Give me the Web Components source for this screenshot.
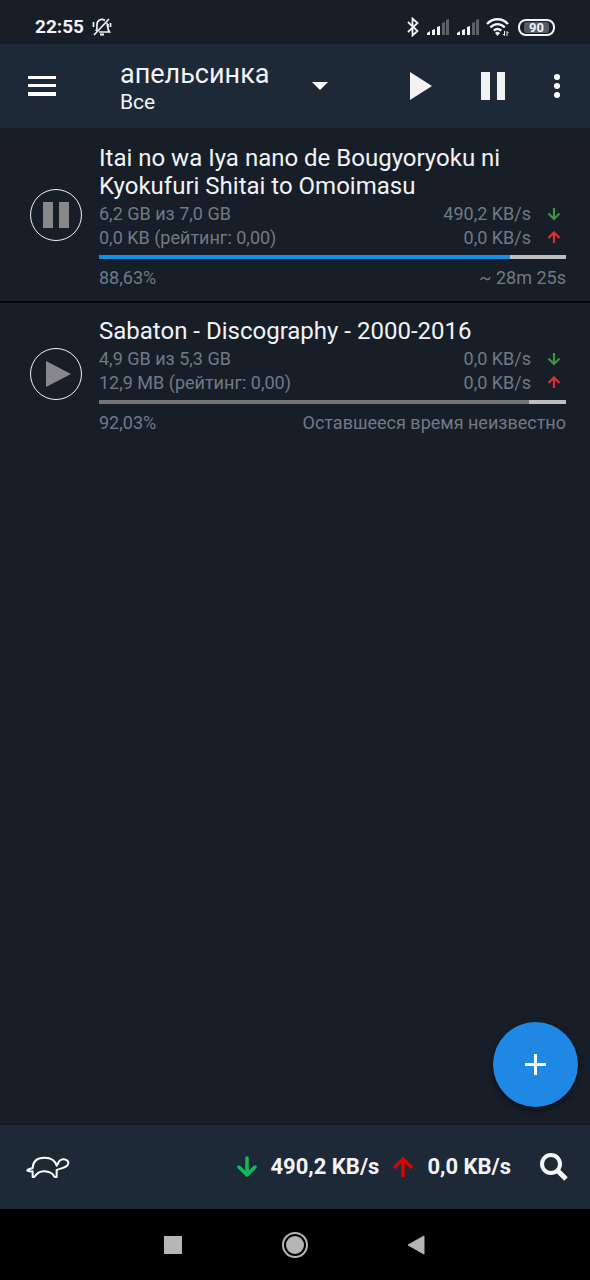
<!DOCTYPE html>
<html lang="ru">
<head>
<meta charset="utf-8">
<meta name="viewport" content="width=device-width, initial-scale=1">
<title>апельсинка</title>
<style>
  body {
    margin: 0;
    background: #171e28;
    color: #f1f3f6;
    font-family: Roboto, "Noto Sans", sans-serif;
    --bar: #1e2937;
    --muted: #6f7b84;
  }
</style>
</head>
<body>
<torrent-app>
  <status-bar slot="status" time="22:55" battery="90"></status-bar>
  <app-toolbar slot="toolbar">
    <span slot="title">апельсинка</span>
    <span slot="subtitle">Все</span>
  </app-toolbar>
  <torrent-item state="active" percent="88">
    <span slot="name">Itai no wa Iya nano de Bougyoryoku ni Kyokufuri Shitai to Omoimasu</span>
    <span slot="size">6,2 GB из 7,0 GB</span>
    <span slot="down">490,2 KB/s</span>
    <span slot="ratio">0,0 KB (рейтинг: 0,00)</span>
    <span slot="up">0,0 KB/s</span>
    <span slot="done">88,63%</span>
    <span slot="eta">~ 28m 25s</span>
  </torrent-item>
  <torrent-item state="stopped" percent="92">
    <span slot="name">Sabaton - Discography - 2000-2016</span>
    <span slot="size">4,9 GB из 5,3 GB</span>
    <span slot="down">0,0 KB/s</span>
    <span slot="ratio">12,9 MB (рейтинг: 0,00)</span>
    <span slot="up">0,0 KB/s</span>
    <span slot="done">92,03%</span>
    <span slot="eta">Оставшееся время неизвестно</span>
  </torrent-item>
  <add-button slot="fab"></add-button>
  <speed-bar slot="footer">
    <span slot="down">490,2 KB/s</span>
    <span slot="up">0,0 KB/s</span>
  </speed-bar>
  <nav-bar slot="nav"></nav-bar>
</torrent-app>

<script>
const reset = `
  :host, * { box-sizing: border-box; }
  button { margin: 0; padding: 0; border: 0; background: none; color: inherit; font: inherit; text-align: left; display: flex; align-items: center; justify-content: center; }
  svg { display: block; flex: none; }
`;

function define(name, css, html) {
  customElements.define(name, class extends HTMLElement {
    constructor() {
      super();
      const template = document.createElement('template');
      template.innerHTML = `<style>${reset}${css}</style>${typeof html === 'function' ? html(this) : html}`;
      this.attachShadow({ mode: 'open' }).append(template.content.cloneNode(true));
    }
  });
}

define('torrent-app', `
  :host { display: flex; flex-direction: column; min-height: 100vh; }
  main { flex: 1; padding-top: 2px; position: relative; }
  .fab { position: absolute; right: 12px; bottom: 18px; }
`, `
  <slot name="status"></slot>
  <slot name="toolbar"></slot>
  <main><slot></slot><div class="fab"><slot name="fab"></slot></div></main>
  <slot name="footer"></slot>
  <slot name="nav"></slot>
`);

const signal = `
  <svg width="24" height="18" viewBox="0 0 24 18" aria-hidden="true">
    <path fill="#f1f3f6" d="M1 17v-2l3-2v4zM6 17v-5l3-1v6zM11 17V9l3-1v9z"/>
    <path fill="#59616b" d="M16 17V5l3-1v13zM20 17V2l3-1v16z"/>
  </svg>`;

define('status-bar', `
  :host { display: flex; align-items: center; height: 44px; padding: 10px 35px 0; }
  .time { font-size: 19px; line-height: 24px; font-weight: 700; }
  .bell { margin-left: 8px; }
  .right { margin-left: auto; display: flex; align-items: center; gap: 6px; }
  .battery { width: 37px; height: 17px; margin-left: 2px; padding: 1px 4px; border: 2px solid #f1f3f6; border-radius: 8px; }
  .level { display: block; height: 11px; border-radius: 3px; background: #535b66; text-align: center; font-size: 13px; line-height: 11px; font-weight: 700; }
`, el => `
  <span class="time">${el.getAttribute('time')}</span>
  <svg class="bell" width="20" height="20" viewBox="0 0 20 20" fill="none" stroke="#f1f3f6" stroke-width="1.700" aria-hidden="true">
    <path d="M13 3.5C9 .8 5 3.500 5 7.500v4L4 14M15 6c.6 2 .2 6 2.500 9H7M2 18 17 2M1.500 5v5M18.500 6v4M16 7v4"/>
    <path d="M8 17.500h4" stroke-width="2"/>
  </svg>
  <div class="right">
    <svg width="14" height="20" viewBox="0 0 14 20" fill="none" stroke="#f1f3f6" stroke-width="1.800" aria-hidden="true"><path d="m2 5 9.500 9-5 4.500v-17l5 4.500L2 15"/></svg>
    ${signal}${signal}
    <svg width="24" height="20" viewBox="0 0 24 20" fill="none" stroke="#f1f3f6" stroke-width="2.400" aria-hidden="true">
      <path d="M1 7c6-6.300 15-6.300 21 0M4.300 10.500c4.500-4.300 10-4.300 14.500 0M7.800 13.600c2.300-2 5-2 7.500 0"/>
      <path d="M9 16q2.500-2.500 5 0l-2.500 3z" fill="#f1f3f6" stroke="none"/>
      <path d="M18.500 14v4.500l-1.500-1.500M21 19v-4.500l1.500 1.500" stroke-width="1"/>
    </svg>
    <div class="battery"><span class="level">${el.getAttribute('battery')}</span></div>
  </div>
`);

define('app-toolbar', `
  :host { display: flex; align-items: center; height: 84px; padding: 0 17px 0 20px; background: var(--bar); }
  .menu { width: 44px; height: 48px; }
  .filter { width: 208px; margin-left: 56px; justify-content: space-between; }
  .text { display: flex; flex-direction: column; }
  .title { font-size: 27px; line-height: 32px; }
  .subtitle { font-size: 21px; line-height: 24px; }
  .actions { display: flex; margin-left: auto; }
  .actions button { width: 72px; height: 56px; }
  .actions .more { width: 32px; margin-left: 12px; }
`, `
  <button class="menu" aria-label="Меню"><svg width="28" height="20" viewBox="0 0 28 20" fill="#fff"><path d="M0 0h28v3H0zM0 8h28v3H0zM0 16h28v4H0z"/></svg></button>
  <button class="filter" aria-haspopup="listbox">
    <span class="text"><span class="title"><slot name="title"></slot></span><span class="subtitle"><slot name="subtitle"></slot></span></span>
    <svg width="16" height="8" viewBox="0 0 16 8" fill="#fff"><path d="M0 0h16L8 8z"/></svg>
  </button>
  <div class="actions">
    <button aria-label="Запустить все"><svg width="22" height="28" viewBox="0 0 22 28" fill="#f3f3f3"><path d="M0 0 22 14 0 28z"/></svg></button>
    <button aria-label="Остановить все"><svg width="24" height="28" viewBox="0 0 24 28" fill="#f3f3f3"><path d="M0 0h9v28H0zM16 0h8v28h-8z"/></svg></button>
    <button class="more" aria-label="Ещё"><svg width="6" height="24" viewBox="0 0 6 24" fill="#fff"><circle cx="3" cy="3" r="3"/><circle cx="3" cy="12" r="3"/><circle cx="3" cy="21" r="3"/></svg></button>
  </div>
`);

define('torrent-item', `
  :host { display: flex; align-items: center; gap: 17px; padding: 14px 24px 11px 30px; }
  :host([state="active"]) { border-bottom: 2px solid #05070a; --fill: #1491e6; }
  :host([state="stopped"]) { --fill: #757575; }
  .toggle { flex: none; width: 52px; height: 52px; margin-bottom: 5px; border: 1px solid #f1f3f6; border-radius: 50%; }
  .body { flex: 1; min-width: 0; }
  h2 { margin: 0 0 2px; font-size: 24px; line-height: 28px; font-weight: 400; }
  .row { display: flex; justify-content: space-between; align-items: center; font-size: 18px; line-height: 24px; color: var(--muted); }
  .speed { display: flex; align-items: center; gap: 16px; padding-right: 5px; }
  progress { display: block; width: 100%; height: 4px; margin: 5px 0 7px; border: 0; appearance: none; -webkit-appearance: none; }
  progress::-webkit-progress-bar { background: #bdbdbd; }
  progress::-webkit-progress-value { background: var(--fill); }
`, el => `
  <button class="toggle" aria-label="${el.getAttribute('state') === 'active' ? 'Пауза' : 'Запуск'}">
    ${el.getAttribute('state') === 'active'
      ? '<svg width="26" height="26" viewBox="0 0 26 26" fill="#888"><path d="M0 0h10v26H0zM16 0h10v26H16z"/></svg>'
      : '<svg width="30" height="26" viewBox="0 0 30 26" fill="#888"><path d="M5 0 30 13 5 26z"/></svg>'}
  </button>
  <div class="body">
    <h2><slot name="name"></slot></h2>
    <div class="row"><slot name="size"></slot><span class="speed"><slot name="down"></slot>
      <svg width="14" height="14" viewBox="0 0 14 14" fill="none" stroke="#3d9444" stroke-width="2.200"><path d="M7 1v11M1.500 6.500 7 12l5.500-5.500"/></svg></span></div>
    <div class="row"><slot name="ratio"></slot><span class="speed"><slot name="up"></slot>
      <svg width="14" height="14" viewBox="0 0 14 14" fill="none" stroke="#dc3038" stroke-width="2.200"><path d="M7 12V1.500M1.500 7 7 1.500 12.500 7"/></svg></span></div>
    <progress max="100" value="${el.getAttribute('percent')}" aria-label="Загружено"></progress>
    <div class="row"><slot name="done"></slot><slot name="eta"></slot></div>
  </div>
`);

define('add-button', `
  :host { display: block; }
  button { width: 85px; height: 85px; border-radius: 50%; background: #1f88e5; box-shadow: 0 3px 6px rgba(0, 0, 0, .5); }
`, `<button aria-label="Добавить"><svg width="23" height="23" viewBox="0 0 23 23" fill="none" stroke="#fff" stroke-width="3"><path d="M11.500 1v21M1 11.500h21"/></svg></button>`);

define('speed-bar', `
  :host { display: flex; align-items: center; height: 84px; padding: 0 20px 0 24px; background: var(--bar); font-size: 22px; line-height: 28px; font-weight: 700; }
  .turtle { width: 48px; height: 48px; }
  .speeds { display: flex; align-items: center; gap: 14px; margin-left: auto; }
  .search { width: 32px; height: 48px; margin-left: 27px; }
`, `
  <button class="turtle" aria-label="Ограничение скорости">
    <svg width="44" height="24" viewBox="78 136 132 72" fill="none" stroke="#fff" stroke-width="6" stroke-linejoin="round"><path d="M82 182C88 177 94 177 98 175C99 152 112 144 134 144C153 144 165 151 170 168C174 165 174 158 179 153C190 144 206 151 205 161C203 175 185 174 170 181V202L163 201Q156 186 133 185Q115 184 103 202H98V185Q88 186 82 182Z"/></svg>
  </button>
  <div class="speeds">
    <svg width="20" height="22" viewBox="0 0 20 22" fill="none" stroke="#10bd55" stroke-width="3.500" stroke-linecap="round" stroke-linejoin="round"><path d="M10 2v17M2 11l8 8 8-8"/></svg>
    <slot name="down"></slot>
    <svg width="20" height="22" viewBox="0 0 20 22" fill="none" stroke="#d20606" stroke-width="3.500"><path d="M10 21V3M1 12l9-9 9 9"/></svg>
    <slot name="up"></slot>
  </div>
  <button class="search" aria-label="Поиск"><svg width="28" height="28" viewBox="0 0 28 28" fill="none" stroke="#f7f8fa"><circle cx="11" cy="11" r="9" stroke-width="4"/><path d="m17 17 9 9" stroke-width="5"/></svg></button>
`);

define('nav-bar', `
  :host { display: flex; align-items: center; justify-content: center; gap: 96px; height: 71px; background: #000; }
  button { width: 26px; height: 48px; }
`, `
  <button aria-label="Недавние"><svg width="18" height="18" viewBox="0 0 18 18" fill="#b5b5b5"><path d="M0 0h18v18H0z"/></svg></button>
  <button aria-label="Домой"><svg width="26" height="26" viewBox="0 0 26 26" fill="#b5b5b5"><circle cx="13" cy="13" r="12" fill="none" stroke="#b5b5b5" stroke-width="2"/><circle cx="13" cy="13" r="9"/></svg></button>
  <button aria-label="Назад"><svg width="20" height="20" viewBox="0 0 20 20" fill="#b5b5b5" stroke="#b5b5b5" stroke-linejoin="round"><path d="M17 1v18L1 10z"/></svg></button>
`);
</script>
</body>
</html>
